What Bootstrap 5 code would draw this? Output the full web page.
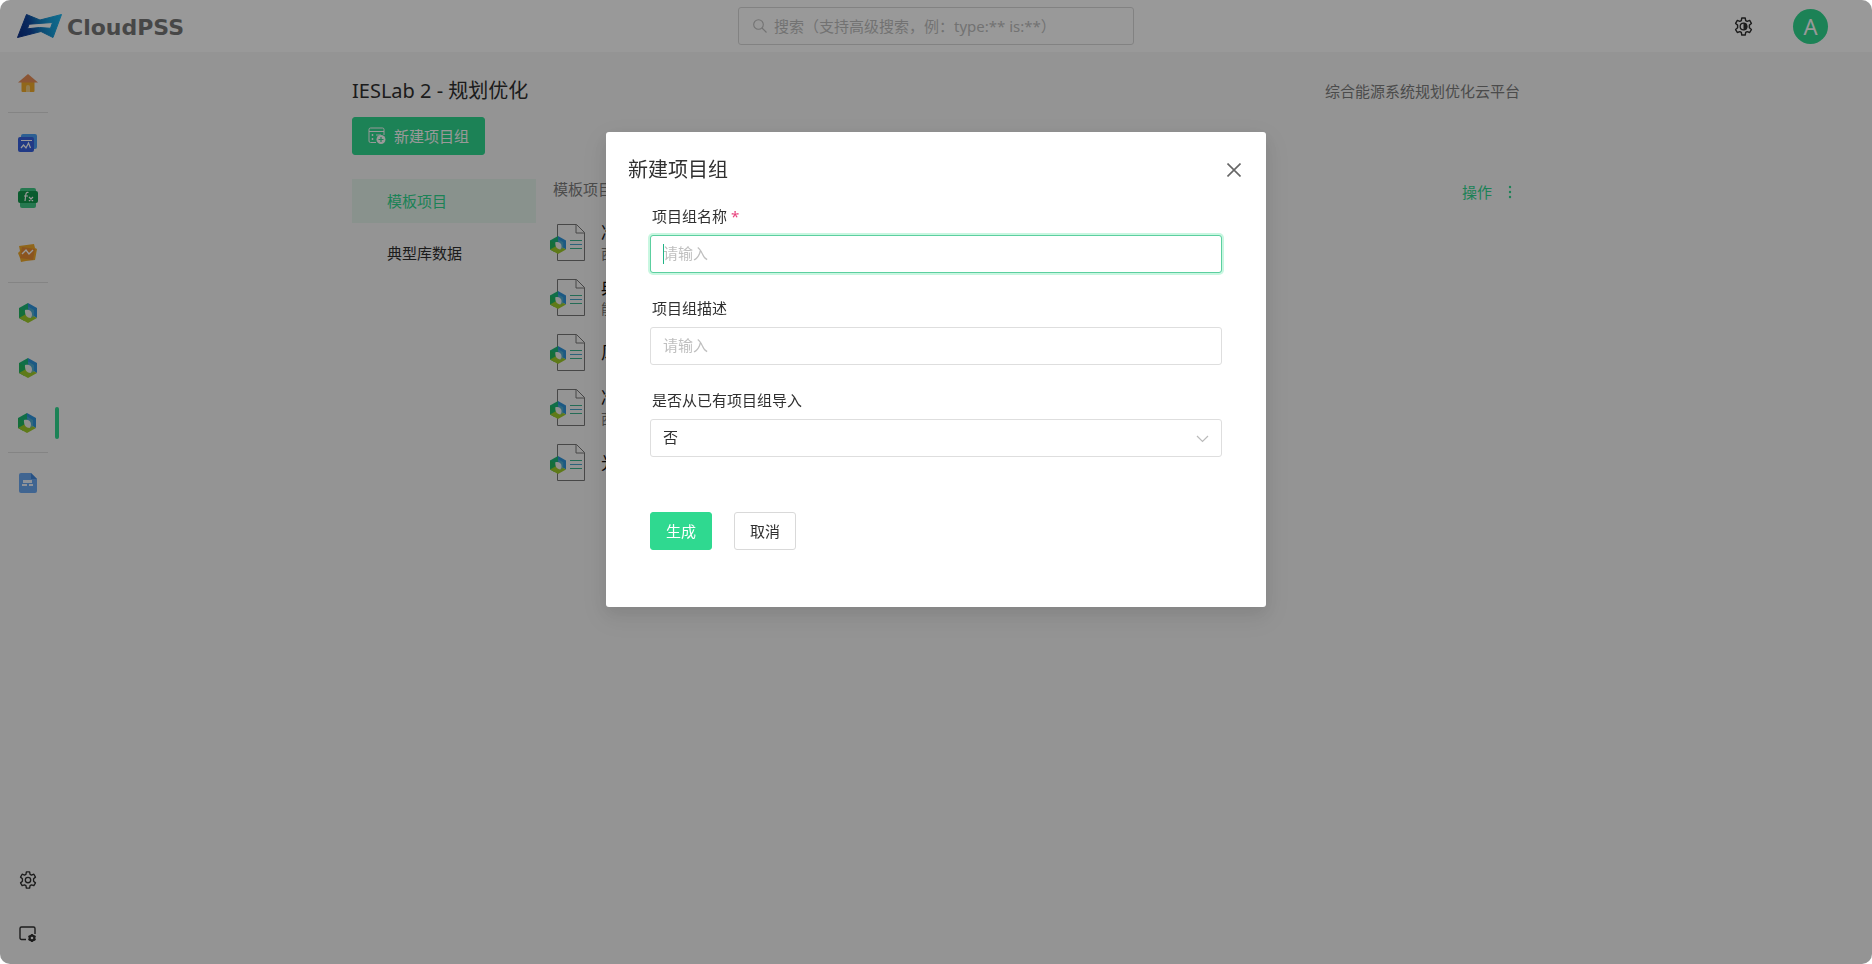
<!DOCTYPE html>
<html lang="zh-CN">
<head>
<meta charset="utf-8">
<meta name="viewport" content="width=device-width, initial-scale=1">
<title>CloudPSS</title>
<link rel="stylesheet" href="https://cdn.jsdelivr.net/npm/bootstrap@5.3.0/dist/css/bootstrap.min.css">
<style>
  :root { --accent: #2fd990; --ink: #303030; --line: #d9d9d9; --hint: #bfbfbf; }
  body { font-family: "Noto Sans", "Noto Sans CJK SC", sans-serif; font-size: 15px; line-height: 22px; color: var(--ink); background: #fff; }
  a { color: inherit; text-decoration: none; }
  svg { display: block; flex: none; }
  .app-shell { background: #f7f7f7; border-radius: 10px; overflow: hidden; }
  .app-bar { height: 52px; background: #fff; display: grid; grid-template-columns: 1fr 396px 1fr; }
  .wordmark { font: bold 22px/24px "DejaVu Sans", sans-serif; color: #777; padding-top: 4px; }
  .search-box { height: 38px; padding-left: 14px; gap: 7px; border: 1px solid var(--line); border-radius: 3px; color: var(--hint); }
  .search-box input { border: 0; outline: 0; background: none; color: inherit; padding: 0; min-width: 0; }
  input::placeholder { color: var(--hint) !important; opacity: 1; }
  .icon-btn { border: 0; background: none; padding: 0; color: var(--ink); }
  .avatar { width: 35px; height: 35px; background: var(--accent); font-size: 22px; color: #fff; }
  .bar-tools { padding-right: 44px; gap: 40px; }
  .side-rail { width: 60px; flex: none; padding: 3px 0 2px; }
  .rail-link { height: 55px; width: 55px; display: flex; align-items: center; justify-content: center; }
  .rail-link.current { width: 59px; padding-left: 18px; justify-content: space-between; }
  .rail-link.current::after { content: ""; width: 4px; height: 32px; border-radius: 2px; background: var(--accent); }
  .rail-line { width: 40px; margin: 2px 8px; border-color: #dcdcdc; opacity: 1; }
  .page-main { padding: 24px 60px 0 0; }
  .page-inner { max-width: 1168px; margin: 0 auto; }
  .page-title { font-size: 20px; line-height: 30px; font-weight: 400; }
  .btn { --bs-btn-border-radius: 3px; --bs-btn-font-size: 15px; --bs-btn-line-height: 22px; --bs-btn-padding-y: 7px; --bs-btn-padding-x: 15px; }
  .btn-accent { --bs-btn-bg: var(--accent); --bs-btn-border-color: var(--accent); --bs-btn-color: #fff; --bs-btn-hover-bg: #28c682; --bs-btn-hover-color: #fff; }
  .btn-plain { --bs-btn-bg: #fff; --bs-btn-border-color: var(--line); --bs-btn-color: var(--ink); }
  .new-group { margin: 11px 0 24px; }
  .group-menu { width: 184px; gap: 8px; margin-right: 14px; }
  .group-menu a { height: 44px; padding: 11px 35px; }
  .group-menu a.active { background: #e4f3eb; color: var(--accent); }
  .list-top { height: 36px; }
  .list-top > span { padding-left: 3px; line-height: 20px; }
  .muted { color: #7d7d7d; }
  .row-item { height: 55px; padding: 0; gap: 15px; background: none; border: 0; color: #111; }
  .row-item b { display: block; font-size: 17px; font-weight: 400; }
  .row-item small { display: block; font-size: 14px; line-height: 20px; color: #777; }
  .ops { color: var(--accent); padding-right: 8px; margin-top: 2px; }
  .modal-backdrop { --bs-backdrop-opacity: .4; border-radius: 10px; }
  .group-dialog { --bs-modal-width: 660px; margin-top: 132px; }
  .group-dialog .modal-content { border: 0; border-radius: 3px; color: var(--ink); box-shadow: 0 6px 16px rgba(0,0,0,.08), 0 9px 28px 8px rgba(0,0,0,.05); }
  .group-dialog .modal-header { padding: 23px 25px 0 22px; border: 0; }
  .group-dialog .modal-title { font-size: 20px; line-height: 30px; font-weight: 400; }
  .group-dialog .modal-body { padding: 20px 44px 57px; }
  .field { margin-bottom: 24px; }
  .field label { display: block; padding-left: 2px; margin-bottom: 8px; }
  .field .form-control, .field .form-select { height: 38px; padding: 6px 12px 8px; font-size: 15px; line-height: 22px; border-color: #dedede; border-radius: 3px; color: var(--ink); }
  .field .form-select { background-position: right 12px center; background-size: 13px;
    background-image: url("data:image/svg+xml,%3Csvg xmlns='http://www.w3.org/2000/svg' viewBox='0 0 13 13'%3E%3Cpath d='M1 4l5.500 5.500L12 4' fill='none' stroke='%23bbb' stroke-width='1.200'/%3E%3C/svg%3E"); }
  .field .is-active { border-color: #5ccfa0; box-shadow: 0 0 0 2px #c9f7e1; }
  .caret { position: absolute; left: 13px; top: 9px; width: 1px; height: 20px; background: #20b486; }
  .star { color: #e8417c; }
  .actions { margin-top: 55px; gap: 22px; }
</style>
</head>
<body>
<svg width="0" height="0" class="position-absolute" aria-hidden="true">
  <defs>
    <linearGradient id="gMark" gradientUnits="userSpaceOnUse" x1="0" y1="18" x2="46" y2="6"><stop offset="0" stop-color="#0c2f86"/><stop offset=".3" stop-color="#0f459e"/><stop offset=".5" stop-color="#1478bc"/><stop offset=".75" stop-color="#18a0dc"/><stop offset="1" stop-color="#1ab4ee"/></linearGradient>
    <symbol id="hex" viewBox="0 0 18 20">
      <path d="M9 0L0 5v10l9-5z" fill="#1cb878"/><path d="M9 0l9 5v10l-9-5z" fill="#2f94dc"/>
      <path d="M0 5v10l5 2.800 4-7.800z" fill="#22b862"/><path d="M0 15l9 5 9-5-9-5z" fill="#9fcc2a"/>
      <path d="M9 3.500l6 3.400v6.600l-3 1.600z" fill="#5cb8cf" opacity=".7"/>
      <path d="M6 7c4-1 7 1 7 4.500 0 2-1 3-1.500 3.500C8 15 5.500 12 6 7z" fill="#f2f2ee"/>
    </symbol>
    <symbol id="gear" viewBox="0 0 20 20">
      <path d="M8.200 1h3.600l.5 2.700 1.600.9 2.600-1 1.800 3.200-2.100 1.700v2.900l2.100 1.800-1.800 3.100-2.600-.9-1.600.9-.5 2.700H8.200l-.5-2.700-1.600-.9-2.600.9-1.800-3.100 2.100-1.800V8.500L1.700 6.800l1.800-3.200 2.600 1 1.600-.9z" fill="none" stroke="currentColor" stroke-width="1.500" stroke-linejoin="round"/>
    </symbol>
    <symbol id="doc" viewBox="0 0 36 38">
      <path d="M7.500.5h19l8 8v28h-27z" fill="none" stroke="#777"/><path d="M26 .5V9h8.500" fill="none" stroke="#777"/>
      <path d="M20 16.500h12M20 24.500h12" stroke="#3cb490" fill="none"/><path d="M20 20.500h12" stroke="#4aa5cc" fill="none"/>
      <use href="#hex" x="0" y="12" width="16" height="18"/>
    </symbol>
  </defs>
</svg>

<div class="app-shell min-vh-100 d-flex flex-column">
  <header class="app-bar align-items-center">
    <a href="#" class="d-flex align-items-center ps-3" aria-label="CloudPSS">
      <svg width="47" height="26" viewBox="0 0 47 26" class="me-1">
        <path d="M10.500 1.500L24 7 45.500 1.500 37 24.500 25 18.500 1.500 24.500zM13 11.200L11.500 15.800l12-1.300 11 .8L36.500 9.500z" fill="url(#gMark)" fill-rule="evenodd" stroke="url(#gMark)" stroke-width="1" stroke-linejoin="round"/>
      </svg>
      <span class="wordmark">CloudPSS</span>
    </a>
    <div class="search-box d-flex align-items-center">
      <svg width="14" height="14" viewBox="0 0 14 14" fill="none" stroke="currentColor" stroke-width="1.100"><circle cx="5.500" cy="5.500" r="4.800"/><path d="M9 9l4.500 4.500"/></svg>
      <input type="search" class="flex-grow-1" aria-label="搜索" placeholder="搜索（支持高级搜索，例：type:** is:**）">
    </div>
    <div class="bar-tools d-flex align-items-center justify-content-end">
      <button class="icon-btn" type="button" aria-label="主题设置">
        <svg width="19" height="19" viewBox="0 0 20 20"><use href="#gear"/><circle cx="10" cy="10" r="3.500" fill="none" stroke="currentColor" stroke-width="1.400"/><path d="M10 6a4 4 0 0 1 0 8z" fill="currentColor"/></svg>
      </button>
      <button type="button" class="icon-btn avatar rounded-circle d-flex align-items-center justify-content-center" aria-label="账户">A</button>
    </div>
  </header>

  <div class="d-flex flex-grow-1">
    <nav class="side-rail d-flex flex-column" aria-label="应用">
      <a class="rail-link" href="#" aria-label="首页"><svg width="20" height="18" viewBox="0 0 20 18"><path d="M3.500 7.500h13V17a1 1 0 0 1-1 1h-11a1 1 0 0 1-1-1z" fill="#f2ac2c"/><path d="M10 0l10 8.500H0z" fill="#e88e58"/><path d="M8 18v-5a2 2 0 0 1 4 0v5z" fill="#f5cf84"/></svg></a>
      <hr class="rail-line">
      <a class="rail-link" href="#" aria-label="仿真"><svg width="19" height="18" viewBox="0 0 19 18"><rect x="3" width="16" height="15" rx="2" fill="#4a9ff5"/><rect y="3" width="16" height="15" rx="2" fill="#3762e0"/><path d="M3 6.500h11M3 14l2.500-3 2.500 3 2.500-5 2 5" fill="none" stroke="#fff" stroke-width="1.200"/></svg></a>
      <a class="rail-link" href="#" aria-label="函数"><svg width="20" height="20" viewBox="0 0 20 20"><rect x="2" width="16" height="20" rx="2" fill="#40c985"/><rect y="3" width="20" height="12" rx="2" fill="#12994d"/><path d="M10.500 4.500c-2-.5-2.500.5-2.800 3L7 13M6 8h4M11 9l4 4M15 9l-4 4" fill="none" stroke="#fff" stroke-width="1.200"/></svg></a>
      <a class="rail-link" href="#" aria-label="应用面板"><svg width="19" height="18" viewBox="0 0 19 18"><path d="M1 2l15-2 1 4 2 1-2 11-9 1-5 1-1-4-2-5 2-2z" fill="#f0aa2c"/><path d="M4 3l13 2-2 11-13-2z" fill="#e88c34"/><path d="M4 10l4-4 3 4 4-4" fill="none" stroke="#fff" stroke-width="1.400"/></svg></a>
      <hr class="rail-line">
      <a class="rail-link" href="#" aria-label="IESLab 仿真"><svg width="18" height="20"><use href="#hex"/></svg></a>
      <a class="rail-link" href="#" aria-label="IESLab 规划"><svg width="18" height="20"><use href="#hex"/></svg></a>
      <a class="rail-link current" href="#" aria-label="IESLab 2" aria-current="page"><svg width="18" height="20"><use href="#hex"/></svg></a>
      <hr class="rail-line">
      <a class="rail-link" href="#" aria-label="文档"><svg width="18" height="20" viewBox="0 0 18 20"><path d="M2 0h10l6 6v12a2 2 0 0 1-2 2H2a2 2 0 0 1-2-2V2a2 2 0 0 1 2-2z" fill="#6ba9f2"/><path d="M12 0l6 6h-6z" fill="#4288dc"/><path d="M4 7h9v3H4zM3 11h5v2H3zM10 11h4v2h-4z" fill="#eef5ff"/></svg></a>
      <a class="rail-link mt-auto" href="#" aria-label="设置"><svg width="18" height="18" viewBox="0 0 20 20"><use href="#gear"/><circle cx="10" cy="10" r="3" fill="none" stroke="currentColor" stroke-width="1.500"/></svg></a>
      <a class="rail-link" href="#" aria-label="窗口设置"><svg width="18" height="17" viewBox="0 0 18 17" fill="none" stroke="currentColor"><path d="M7 13.500H2.500a1.500 1.500 0 0 1-1.500-1.500V2.500A1.500 1.500 0 0 1 2.500 1h12A1.500 1.500 0 0 1 16 2.500V8" stroke-width="1.400"/><circle cx="13" cy="12" r="2.400" stroke-width="2.200"/><path d="M13 8v1.500M13 14.500V16M9.500 10l1.300.8M15.200 13.200l1.300.8M9.500 14l1.300-.8M15.200 10.800l1.300-.8" stroke-width="1.800"/></svg></a>
    </nav>

    <main class="page-main flex-grow-1">
      <div class="page-inner">
        <div class="d-flex justify-content-between align-items-center">
          <h1 class="page-title mb-0">IESLab 2 - 规划优化</h1>
          <span class="muted">综合能源系统规划优化云平台</span>
        </div>
        <button type="button" class="btn btn-accent new-group d-flex align-items-center gap-2">
          <svg width="18" height="18" viewBox="0 0 18 18" fill="none" stroke="#fff"><path d="M8 15.500H2.500a1.500 1.500 0 0 1-1.500-1.500V2.500A1.500 1.500 0 0 1 2.500 1h12A1.500 1.500 0 0 1 16 2.500V8M1 4.500h15M8 8h5M3.500 8h2M3.500 12h2M4.500 7v2M4.500 11v2"/><circle cx="13" cy="12.500" r="4.500" fill="#fff" stroke="none"/><path d="M10.500 12.500h5M13 10v5" stroke="#2fd990" stroke-width="1.200"/></svg>
          新建项目组
        </button>
        <div class="d-flex">
          <nav class="group-menu nav flex-column flex-nowrap" aria-label="项目分类">
            <a href="#" class="active">模板项目</a>
            <a href="#">典型库数据</a>
          </nav>
          <section class="flex-grow-1">
            <div class="list-top d-flex justify-content-between align-items-start">
              <span class="muted">模板项目</span>
              <button type="button" class="icon-btn ops d-flex align-items-center gap-3">操作
                <svg width="4" height="14" viewBox="0 0 4 14" fill="currentColor"><circle cx="2" cy="2" r="1.200"/><circle cx="2" cy="7" r="1.200"/><circle cx="2" cy="12" r="1.200"/></svg>
              </button>
            </div>
            <div class="list-group list-group-flush">
              <a href="#" class="list-group-item row-item d-flex align-items-center"><svg width="36" height="38"><use href="#doc"/></svg><span><b>冷热电</b><small>西北</small></span></a>
              <a href="#" class="list-group-item row-item d-flex align-items-center"><svg width="36" height="38"><use href="#doc"/></svg><span><b>典型</b><small>能源</small></span></a>
              <a href="#" class="list-group-item row-item d-flex align-items-center"><svg width="36" height="38"><use href="#doc"/></svg><span><b>风光</b></span></a>
              <a href="#" class="list-group-item row-item d-flex align-items-center"><svg width="36" height="38"><use href="#doc"/></svg><span><b>冷热电</b><small>西北</small></span></a>
              <a href="#" class="list-group-item row-item d-flex align-items-center"><svg width="36" height="38"><use href="#doc"/></svg><span><b>光伏</b></span></a>
            </div>
          </section>
        </div>
      </div>
    </main>
  </div>
</div>

<div class="modal-backdrop show"></div>
<div class="modal show d-block" role="dialog" aria-modal="true" aria-labelledby="dlgTitle">
  <div class="modal-dialog group-dialog">
    <div class="modal-content">
      <div class="modal-header">
        <h2 class="modal-title" id="dlgTitle">新建项目组</h2>
        <button type="button" class="icon-btn" aria-label="关闭"><svg width="14" height="14" viewBox="0 0 14 14" stroke="#666" stroke-width="1.600"><path d="M.5.5l13 13M13.500.5l-13 13"/></svg></button>
      </div>
      <form class="modal-body">
        <div class="field">
          <label for="gName">项目组名称 <span class="star">*</span></label>
          <div class="position-relative">
            <input id="gName" type="text" class="form-control is-active" placeholder="请输入" required>
            <span class="caret"></span>
          </div>
        </div>
        <div class="field">
          <label for="gDesc">项目组描述</label>
          <input id="gDesc" type="text" class="form-control" placeholder="请输入">
        </div>
        <div class="field mb-0">
          <label for="gImport">是否从已有项目组导入</label>
          <select id="gImport" class="form-select"><option>否</option><option>是</option></select>
        </div>
        <div class="actions d-flex">
          <button type="submit" class="btn btn-accent">生成</button>
          <button type="button" class="btn btn-plain">取消</button>
        </div>
      </form>
    </div>
  </div>
</div>
<script src="https://cdn.jsdelivr.net/npm/bootstrap@5.3.0/dist/js/bootstrap.bundle.min.js"></script>
</body>
</html>
